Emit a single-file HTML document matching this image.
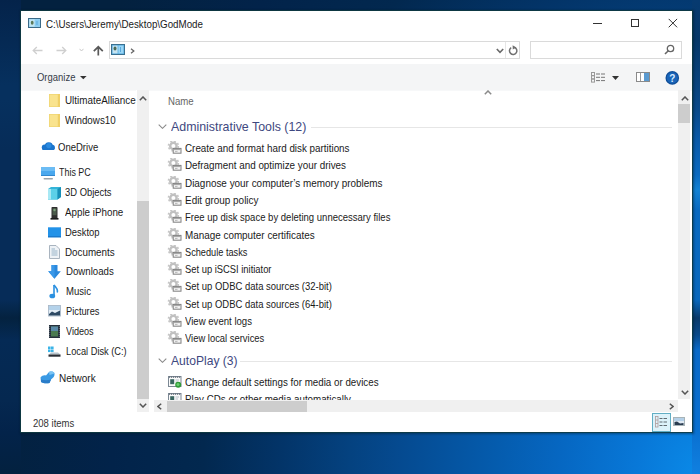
<!DOCTYPE html><html><head><meta charset="utf-8"><style>html,body{margin:0;padding:0;width:700px;height:474px;overflow:hidden;}body{position:relative;background:#0a2550;font-family:"Liberation Sans", sans-serif;}.t{position:absolute;white-space:pre;line-height:1;transform-origin:0 0;}.r{position:absolute;}</style></head><body><div class="r" style="left:0;top:0;width:700px;height:474px;background:radial-gradient(700px 840px at 700px 474px,#0a8ae8 0%,#0878d8 9%,#0667c2 20%,#055cae 29%,#054a90 43%,#044280 50%,#033468 60%,#02284f 71%,#02234a 84%,#03213f 100%);"></div><div class="r" style="left:0;top:0;width:21px;height:474px;background:linear-gradient(180deg,#04234a 0px,#06305e 85px,#06305e 100px,#062c58 150px,#062c58 300px,#04223f 318px,#052a55 340px,#052850 400px,#03234a 432px,#03213f 474px);"></div><div class="r" style="left:692px;top:0;width:8px;height:474px;background:linear-gradient(180deg,#073a70 0px,#063868 40px,#0a4a8a 110px,#0a5aa8 140px,#0a6ac0 175px,#1282d4 190px,#0a6ac0 210px,#0a68bc 300px,#0a3a6a 318px,#0a4a8a 335px,#0a6ac8 350px,#0a70d0 430px,#1080e0 474px);"></div><div class="r" style="left:21px;top:11px;width:671px;height:421px;background:#fff;box-shadow:0 0 0 1px rgba(16,60,66,0.82),0 0 2px 1.5px rgba(4,28,40,0.45);"></div><svg class="r" style="left:28px;top:18px" width="13" height="10" viewBox="0 0 13 10"><rect x="0.5" y="0.5" width="12" height="9" fill="#9ad4f0" stroke="#3a6a88"/><rect x="1.5" y="1.5" width="5" height="7" fill="#c4e6f4"/><ellipse cx="4.2" cy="4.8" rx="1.4" ry="2" fill="#5a7a5a"/><rect x="7" y="1.5" width="4.5" height="7" fill="#88ccf2"/><path d="M9 3 V7" stroke="#5aa8d8"/></svg><div class="t" style="left:45.80px;top:19.90px;font-size:10.4px;color:#1a1a1a;transform:scaleX(0.9407);">C:\Users\Jeremy\Desktop\GodMode</div><div class="r" style="left:593px;top:23px;width:9px;height:1px;background:#333;"></div><div class="r" style="left:631px;top:19px;width:6px;height:6px;border:1px solid #333;"></div><svg class="r" style="left:668px;top:18px" width="10" height="10" viewBox="0 0 10 10"><path d="M0.7 0.9 L9.1 9.3 M9.1 0.9 L0.7 9.3" stroke="#333" stroke-width="1"/></svg><svg class="r" style="left:32px;top:45px" width="11" height="10" viewBox="0 0 11 10"><path d="M1 5.5 H10.5 M4.8 2 L1.2 5.5 L4.8 9" stroke="#cfcfcf" stroke-width="1.3" fill="none"/></svg><svg class="r" style="left:56px;top:45px" width="11" height="10" viewBox="0 0 11 10"><path d="M0.5 5.5 H10 M6.2 2 L9.8 5.5 L6.2 9" stroke="#cfcfcf" stroke-width="1.3" fill="none"/></svg><svg class="r" style="left:79px;top:48px" width="5" height="4" viewBox="0 0 5 4"><path d="M0.5 0.8 L2.5 3 L4.5 0.8" stroke="#c8c8c8" stroke-width="1" fill="none"/></svg><svg class="r" style="left:93px;top:45px" width="11" height="11" viewBox="0 0 11 11"><path d="M5.3 10.5 V2 M0.8 6.2 L5.3 1.8 L9.8 6.2" stroke="#5a5a5a" stroke-width="1.7" fill="none"/></svg><div class="r" style="left:109px;top:41px;width:409px;height:16px;border:1px solid #dadada;background:#fff"></div><div class="r" style="left:505px;top:42px;width:1px;height:16px;background:#e6e6e6;"></div><svg class="r" style="left:111px;top:44px" width="14" height="11" viewBox="0 0 14 11"><rect x="0.5" y="0.5" width="13" height="10" fill="#5aaee0" stroke="#3a7090"/><rect x="1.6" y="1.6" width="5" height="7.8" fill="#c8e4f0"/><ellipse cx="4" cy="4.6" rx="1.5" ry="2" fill="#4a6a58"/><rect x="7.4" y="1.6" width="5" height="7.8" fill="#9ad6f6"/><path d="M9.5 3 V8" stroke="#5aa8dc"/></svg><svg class="r" style="left:130px;top:48px" width="5" height="6" viewBox="0 0 5 6"><path d="M1 0.8 L3.8 3 L1 5.2" stroke="#666" stroke-width="1.3" fill="none"/></svg><svg class="r" style="left:496px;top:48px" width="8" height="6" viewBox="0 0 8 6"><path d="M0.8 1 L4 4.3 L7.2 1" stroke="#6a6a6a" stroke-width="1.6" fill="none"/></svg><svg class="r" style="left:508px;top:45px" width="11" height="11" viewBox="0 0 11 11"><path d="M3.2 2.6 A3.7 3.7 0 1 0 6.3 2.2" stroke="#707070" stroke-width="1.5" fill="none"/><path d="M4.6 0.2 L8.2 2.4 L4.8 4.6 Z" fill="#707070"/></svg><div class="r" style="left:530px;top:41px;width:150px;height:16px;border:1px solid #dadada;background:#fff"></div><svg class="r" style="left:664px;top:44px" width="11" height="11" viewBox="0 0 11 11"><circle cx="6.5" cy="4.5" r="3.2" stroke="#666" stroke-width="1.3" fill="none"/><path d="M4.3 6.8 L1 10" stroke="#666" stroke-width="1.6"/></svg><div class="r" style="left:21px;top:64px;width:671px;height:26px;background:#f4f5f6;"></div><div class="r" style="left:21px;top:90px;width:671px;height:1px;background:#f7f8f9;"></div><div class="t" style="left:37.00px;top:73.00px;font-size:10.4px;color:#363c48;transform:scaleX(0.9106);">Organize</div><svg class="r" style="left:80px;top:76px" width="7" height="4" viewBox="0 0 7 4"><path d="M0 0 H6.6 L3.3 3.2 Z" fill="#333"/></svg><svg class="r" style="left:591px;top:72px" width="15" height="11" viewBox="0 0 15 11"><g fill="none" stroke="#999" stroke-width="1"><rect x="0.5" y="0.5" width="3" height="3"/><rect x="0.5" y="3.8" width="3" height="3"/><rect x="0.5" y="7.1" width="3" height="3"/></g><g stroke="#777" stroke-width="1"><path d="M5 2 H9 M10 2 H14 M5 5.3 H9 M10 5.3 H14 M5 8.6 H9 M10 8.6 H14"/></g></svg><svg class="r" style="left:612px;top:76px" width="7" height="4" viewBox="0 0 7 4"><path d="M0 0 H7 L3.5 4 Z" fill="#333"/></svg><svg class="r" style="left:636px;top:72px" width="14" height="10" viewBox="0 0 14 10"><rect x="0.5" y="0.5" width="13" height="9" fill="#fff" stroke="#8a8a8a"/><rect x="8" y="1" width="5" height="8" fill="#5a9ad0"/><path d="M4.5 1 V9" stroke="#9a9a9a"/></svg><svg class="r" style="left:665px;top:71px" width="15" height="14" viewBox="0 0 15 14"><circle cx="7.3" cy="6.9" r="6.8" fill="#0f4e98"/><circle cx="7.3" cy="6.9" r="5.6" fill="#1a64b8"/><text x="7.4" y="10.6" text-anchor="middle" font-family="Liberation Sans" font-weight="bold" font-size="10" fill="#d8ecff">?</text></svg><div class="t" style="left:65.10px;top:96.40px;font-size:10.4px;color:#1a1a1a;transform:scaleX(0.9490);">UltimateAlliance</div><div class="t" style="left:65.10px;top:115.60px;font-size:10.4px;color:#1a1a1a;transform:scaleX(0.9438);">Windows10</div><div class="t" style="left:58.40px;top:142.70px;font-size:10.4px;color:#1a1a1a;transform:scaleX(0.9159);">OneDrive</div><div class="t" style="left:59.20px;top:168.20px;font-size:10.4px;color:#1a1a1a;transform:scaleX(0.8578);">This PC</div><div class="t" style="left:65.10px;top:188.40px;font-size:10.4px;color:#1a1a1a;transform:scaleX(0.9046);">3D Objects</div><div class="t" style="left:65.10px;top:208.00px;font-size:10.4px;color:#1a1a1a;transform:scaleX(0.9429);">Apple iPhone</div><div class="t" style="left:65.30px;top:228.00px;font-size:10.4px;color:#1a1a1a;transform:scaleX(0.9049);">Desktop</div><div class="t" style="left:65.30px;top:247.50px;font-size:10.4px;color:#1a1a1a;transform:scaleX(0.9455);">Documents</div><div class="t" style="left:65.50px;top:267.40px;font-size:10.4px;color:#1a1a1a;transform:scaleX(0.9298);">Downloads</div><div class="t" style="left:65.50px;top:287.20px;font-size:10.4px;color:#1a1a1a;transform:scaleX(0.9211);">Music</div><div class="t" style="left:65.50px;top:307.30px;font-size:10.4px;color:#1a1a1a;transform:scaleX(0.8922);">Pictures</div><div class="t" style="left:65.50px;top:327.20px;font-size:10.4px;color:#1a1a1a;transform:scaleX(0.8736);">Videos</div><div class="t" style="left:65.50px;top:347.30px;font-size:10.4px;color:#1a1a1a;transform:scaleX(0.8908);">Local Disk (C:)</div><div class="t" style="left:58.80px;top:373.60px;font-size:10.4px;color:#1a1a1a;transform:scaleX(0.9630);">Network</div><svg class="r" style="left:49px;top:94px" width="11" height="13" viewBox="0 0 11 13"><rect x="0" y="0" width="11" height="13" fill="#f9e38e"/><rect x="0.4" y="0.4" width="10.2" height="12.2" fill="none" stroke="#f0d676" stroke-width="0.8"/><rect x="8.8" y="0" width="2.2" height="13" fill="#f0d068"/></svg><svg class="r" style="left:49px;top:114px" width="11" height="13" viewBox="0 0 11 13"><rect x="0" y="0" width="11" height="13" fill="#f9e38e"/><rect x="0.4" y="0.4" width="10.2" height="12.2" fill="none" stroke="#f0d676" stroke-width="0.8"/><rect x="8.8" y="0" width="2.2" height="13" fill="#f0d068"/></svg><svg class="r" style="left:41px;top:142px" width="14" height="8" viewBox="0 0 14 8"><g fill="#1a74cc"><circle cx="7.8" cy="4.2" r="4"/><circle cx="3.6" cy="5.2" r="2.8"/><circle cx="11.3" cy="5.4" r="2.6"/><rect x="1" y="5" width="12.5" height="3" rx="1.5"/></g><circle cx="7.8" cy="3.6" r="2.6" fill="#2a8ae0"/></svg><svg class="r" style="left:41px;top:167px" width="14" height="13" viewBox="0 0 14 13"><rect x="0" y="0" width="14" height="9" fill="#4aa8ee"/><rect x="0" y="0" width="14" height="4" fill="#6cbcf4"/><rect x="0" y="8.2" width="14" height="0.8" fill="#2a80c8"/><rect x="2.5" y="11" width="9.5" height="1.6" rx="0.8" fill="#9aa4ac"/></svg><svg class="r" style="left:48px;top:187px" width="13" height="13" viewBox="0 0 13 13"><path d="M0 2 L3 0 H13 V10 L9.5 12.5 H0Z" fill="#34b4d8"/><path d="M0 2 H9.5 V12.5 H0Z" fill="#5cd0e8"/><path d="M0 2 H3 V12.5 H0Z" fill="#a8e8f4"/><path d="M9.5 2 L13 0 V10 L9.5 12.5Z" fill="#1890b8"/></svg><svg class="r" style="left:50px;top:207px" width="9" height="13" viewBox="0 0 9 13"><rect x="1.5" y="0" width="6" height="12" rx="0.8" fill="#2e2e2e"/><rect x="2.5" y="1.2" width="4" height="7" fill="#4a5a4a"/><circle cx="4.5" cy="3" r="1.2" fill="#7aa07a"/><rect x="0.5" y="11" width="8" height="1.6" fill="#1a1a1a"/></svg><svg class="r" style="left:48px;top:227px" width="13" height="11" viewBox="0 0 13 11"><rect x="0" y="0.3" width="13" height="10" fill="#2292e8"/><rect x="0" y="9.3" width="13" height="1" fill="#1870c0"/></svg><svg class="r" style="left:49px;top:245px" width="11" height="14" viewBox="0 0 11 14"><path d="M0.5 0.5 H7 L10.5 4 V13.5 H0.5Z" fill="#eef2f6" stroke="#a0acb8" stroke-width="0.9"/><path d="M2.5 4 H6 M2.5 6 H8.5 M2.5 8 H8.5 M2.5 10 H8.5" stroke="#98b4c8" stroke-width="1.1"/></svg><svg class="r" style="left:48px;top:265px" width="13" height="14" viewBox="0 0 13 14"><path d="M3.5 0 H9.5 V6.3 H12.8 L6.5 13.8 L0.2 6.3 H3.5Z" fill="#2a88dc"/><path d="M3.5 0 H6.5 V13.8 L0.2 6.3 H3.5Z" fill="#3a98e8"/></svg><svg class="r" style="left:49px;top:284px" width="10" height="15" viewBox="0 0 10 15"><path d="M5 1 V11.5" stroke="#2a90e0" stroke-width="1.6"/><ellipse cx="3.3" cy="12" rx="2.9" ry="2.3" fill="#2a90e0"/><path d="M5 0.8 C6 3 9.5 4.5 8.2 8.5" stroke="#2a90e0" stroke-width="1.6" fill="none"/></svg><svg class="r" style="left:48px;top:305px" width="13" height="12" viewBox="0 0 13 12"><rect x="0.5" y="0.5" width="12" height="10.5" fill="#e4eef6" stroke="#a8b8c8" stroke-width="0.9"/><rect x="1" y="1" width="11" height="4" fill="#b4d2ea"/><path d="M1 9 L4 6.5 L7 8 L12 5.5 V10.5 H1Z" fill="#2e4a64"/></svg><svg class="r" style="left:49px;top:325px" width="11" height="13" viewBox="0 0 11 13"><rect x="0" y="0" width="11" height="13" fill="#26303c"/><rect x="2" y="1.5" width="7" height="10" fill="#4a7a50"/><rect x="2" y="1.5" width="7" height="4.5" fill="#5a8aa8"/><path d="M0.7 1 V12 M10.3 1 V12" stroke="#7a8490" stroke-width="0.8" stroke-dasharray="1 1"/></svg><svg class="r" style="left:48px;top:346px" width="13" height="11" viewBox="0 0 13 11"><g fill="#3ab4e8"><rect x="0" y="0.5" width="2.6" height="2.6"/><rect x="3" y="0.5" width="2.6" height="2.6"/><rect x="0" y="3.5" width="2.6" height="2.6"/><rect x="3" y="3.5" width="2.6" height="2.6"/></g><path d="M3 6.5 H10 L12.5 8.5 H1Z" fill="#b8c4cc"/><rect x="0.5" y="8.5" width="12" height="2.2" fill="#2a2e34"/></svg><svg class="r" style="left:40px;top:371px" width="15" height="13" viewBox="0 0 15 13"><path d="M0.5 6.5 C2 4.5 4 4 6 4.5 L9 1 C11 0 14 0.5 14.5 2.5 C15 5 13 7 11 8.5 L9.5 12 C7 12.5 3 12.5 1 11 Z" fill="#3a9ae4"/><path d="M9 1 C11 0 14 0.5 14.5 2.5 C13 3 11 3.5 9.5 4 Z" fill="#7ac4f4"/><path d="M1 11 C3 12.5 7 12.5 9.5 12 L11 8.5 C8 9.5 4 9.5 1 8.5Z" fill="#2a7cc8"/></svg><div class="r" style="left:136px;top:90px;width:1px;height:20px;background:#fff;"></div><div class="r" style="left:137px;top:90px;width:12px;height:322px;background:#f0f0f0;"></div><div class="r" style="left:137px;top:201px;width:12px;height:198px;background:#cdcdcd;"></div><svg class="r" style="left:139px;top:96px" width="8" height="5" viewBox="0 0 8 5"><path d="M0.8 4.3 L4 1 L7.2 4.3" stroke="#555" stroke-width="1.5" fill="none"/></svg><svg class="r" style="left:139px;top:403px" width="8" height="5" viewBox="0 0 8 5"><path d="M0.8 0.8 L4 4 L7.2 0.8" stroke="#555" stroke-width="1.5" fill="none"/></svg><div class="t" style="left:167.70px;top:96.70px;font-size:10.4px;color:#666;transform:scaleX(0.9272);">Name</div><svg class="r" style="left:484px;top:90px" width="8" height="5" viewBox="0 0 8 5"><path d="M0.8 4.2 L4 1 L7.2 4.2" stroke="#8a8a8a" stroke-width="1.5" fill="none"/></svg><svg class="r" style="left:158px;top:124px" width="9" height="5" viewBox="0 0 9 5"><path d="M0.7 0.7 L4.5 4.3 L8.3 0.7" stroke="#8a8a8a" stroke-width="1.1" fill="none"/></svg><div class="t" style="left:170.80px;top:121.20px;font-size:12.4px;color:#3e4880;transform:scaleX(0.9990);">Administrative Tools (12)</div><div class="r" style="left:311px;top:127px;width:361px;height:1px;background:#e6e6e6;"></div><div class="t" style="left:184.80px;top:144.00px;font-size:10.4px;color:#1a1a1a;transform:scaleX(0.9463);">Create and format hard disk partitions</div><svg class="r" style="left:167px;top:141px" width="15" height="15" viewBox="0 0 15 15"><circle cx="6.4" cy="5" r="3.2" fill="none" stroke="#c0c0c0" stroke-width="2.4"/><circle cx="6.4" cy="5" r="4.9" fill="none" stroke="#c6c6c6" stroke-width="1.7" stroke-dasharray="1.9 1.95"/><rect x="6.2" y="7.4" width="7.8" height="4.8" fill="#f4f4f4" stroke="#808080"/><path d="M6.7 8.6 H13.5" stroke="#a0a0a0" stroke-width="1"/><path d="M8 10.4 H10.5" stroke="#b0b0b0" stroke-width="0.9"/></svg><div class="t" style="left:184.80px;top:161.30px;font-size:10.4px;color:#1a1a1a;transform:scaleX(0.9482);">Defragment and optimize your drives</div><svg class="r" style="left:167px;top:158px" width="15" height="15" viewBox="0 0 15 15"><circle cx="6.4" cy="5" r="3.2" fill="none" stroke="#c0c0c0" stroke-width="2.4"/><circle cx="6.4" cy="5" r="4.9" fill="none" stroke="#c6c6c6" stroke-width="1.7" stroke-dasharray="1.9 1.95"/><rect x="6.2" y="7.4" width="7.8" height="4.8" fill="#f4f4f4" stroke="#808080"/><path d="M6.7 8.6 H13.5" stroke="#a0a0a0" stroke-width="1"/><path d="M8 10.4 H10.5" stroke="#b0b0b0" stroke-width="0.9"/></svg><div class="t" style="left:184.80px;top:178.60px;font-size:10.4px;color:#1a1a1a;transform:scaleX(0.9539);">Diagnose your computer’s memory problems</div><svg class="r" style="left:167px;top:176px" width="15" height="15" viewBox="0 0 15 15"><circle cx="6.4" cy="5" r="3.2" fill="none" stroke="#c0c0c0" stroke-width="2.4"/><circle cx="6.4" cy="5" r="4.9" fill="none" stroke="#c6c6c6" stroke-width="1.7" stroke-dasharray="1.9 1.95"/><rect x="6.2" y="7.4" width="7.8" height="4.8" fill="#f4f4f4" stroke="#808080"/><path d="M6.7 8.6 H13.5" stroke="#a0a0a0" stroke-width="1"/><path d="M8 10.4 H10.5" stroke="#b0b0b0" stroke-width="0.9"/></svg><div class="t" style="left:184.80px;top:195.90px;font-size:10.4px;color:#1a1a1a;transform:scaleX(0.9567);">Edit group policy</div><svg class="r" style="left:167px;top:193px" width="15" height="15" viewBox="0 0 15 15"><circle cx="6.4" cy="5" r="3.2" fill="none" stroke="#c0c0c0" stroke-width="2.4"/><circle cx="6.4" cy="5" r="4.9" fill="none" stroke="#c6c6c6" stroke-width="1.7" stroke-dasharray="1.9 1.95"/><rect x="6.2" y="7.4" width="7.8" height="4.8" fill="#f4f4f4" stroke="#808080"/><path d="M6.7 8.6 H13.5" stroke="#a0a0a0" stroke-width="1"/><path d="M8 10.4 H10.5" stroke="#b0b0b0" stroke-width="0.9"/></svg><div class="t" style="left:184.80px;top:213.20px;font-size:10.4px;color:#1a1a1a;transform:scaleX(0.9165);">Free up disk space by deleting unnecessary files</div><svg class="r" style="left:167px;top:210px" width="15" height="15" viewBox="0 0 15 15"><circle cx="6.4" cy="5" r="3.2" fill="none" stroke="#c0c0c0" stroke-width="2.4"/><circle cx="6.4" cy="5" r="4.9" fill="none" stroke="#c6c6c6" stroke-width="1.7" stroke-dasharray="1.9 1.95"/><rect x="6.2" y="7.4" width="7.8" height="4.8" fill="#f4f4f4" stroke="#808080"/><path d="M6.7 8.6 H13.5" stroke="#a0a0a0" stroke-width="1"/><path d="M8 10.4 H10.5" stroke="#b0b0b0" stroke-width="0.9"/></svg><div class="t" style="left:184.80px;top:230.50px;font-size:10.4px;color:#1a1a1a;transform:scaleX(0.9509);">Manage computer certificates</div><svg class="r" style="left:167px;top:228px" width="15" height="15" viewBox="0 0 15 15"><circle cx="6.4" cy="5" r="3.2" fill="none" stroke="#c0c0c0" stroke-width="2.4"/><circle cx="6.4" cy="5" r="4.9" fill="none" stroke="#c6c6c6" stroke-width="1.7" stroke-dasharray="1.9 1.95"/><rect x="6.2" y="7.4" width="7.8" height="4.8" fill="#f4f4f4" stroke="#808080"/><path d="M6.7 8.6 H13.5" stroke="#a0a0a0" stroke-width="1"/><path d="M8 10.4 H10.5" stroke="#b0b0b0" stroke-width="0.9"/></svg><div class="t" style="left:184.80px;top:247.80px;font-size:10.4px;color:#1a1a1a;transform:scaleX(0.8855);">Schedule tasks</div><svg class="r" style="left:167px;top:245px" width="15" height="15" viewBox="0 0 15 15"><circle cx="6.4" cy="5" r="3.2" fill="none" stroke="#c0c0c0" stroke-width="2.4"/><circle cx="6.4" cy="5" r="4.9" fill="none" stroke="#c6c6c6" stroke-width="1.7" stroke-dasharray="1.9 1.95"/><rect x="6.2" y="7.4" width="7.8" height="4.8" fill="#f4f4f4" stroke="#808080"/><path d="M6.7 8.6 H13.5" stroke="#a0a0a0" stroke-width="1"/><path d="M8 10.4 H10.5" stroke="#b0b0b0" stroke-width="0.9"/></svg><div class="t" style="left:184.80px;top:265.10px;font-size:10.4px;color:#1a1a1a;transform:scaleX(0.9022);">Set up iSCSI initiator</div><svg class="r" style="left:167px;top:262px" width="15" height="15" viewBox="0 0 15 15"><circle cx="6.4" cy="5" r="3.2" fill="none" stroke="#c0c0c0" stroke-width="2.4"/><circle cx="6.4" cy="5" r="4.9" fill="none" stroke="#c6c6c6" stroke-width="1.7" stroke-dasharray="1.9 1.95"/><rect x="6.2" y="7.4" width="7.8" height="4.8" fill="#f4f4f4" stroke="#808080"/><path d="M6.7 8.6 H13.5" stroke="#a0a0a0" stroke-width="1"/><path d="M8 10.4 H10.5" stroke="#b0b0b0" stroke-width="0.9"/></svg><div class="t" style="left:184.80px;top:282.40px;font-size:10.4px;color:#1a1a1a;transform:scaleX(0.9110);">Set up ODBC data sources (32-bit)</div><svg class="r" style="left:167px;top:279px" width="15" height="15" viewBox="0 0 15 15"><circle cx="6.4" cy="5" r="3.2" fill="none" stroke="#c0c0c0" stroke-width="2.4"/><circle cx="6.4" cy="5" r="4.9" fill="none" stroke="#c6c6c6" stroke-width="1.7" stroke-dasharray="1.9 1.95"/><rect x="6.2" y="7.4" width="7.8" height="4.8" fill="#f4f4f4" stroke="#808080"/><path d="M6.7 8.6 H13.5" stroke="#a0a0a0" stroke-width="1"/><path d="M8 10.4 H10.5" stroke="#b0b0b0" stroke-width="0.9"/></svg><div class="t" style="left:184.80px;top:299.70px;font-size:10.4px;color:#1a1a1a;transform:scaleX(0.9110);">Set up ODBC data sources (64-bit)</div><svg class="r" style="left:167px;top:297px" width="15" height="15" viewBox="0 0 15 15"><circle cx="6.4" cy="5" r="3.2" fill="none" stroke="#c0c0c0" stroke-width="2.4"/><circle cx="6.4" cy="5" r="4.9" fill="none" stroke="#c6c6c6" stroke-width="1.7" stroke-dasharray="1.9 1.95"/><rect x="6.2" y="7.4" width="7.8" height="4.8" fill="#f4f4f4" stroke="#808080"/><path d="M6.7 8.6 H13.5" stroke="#a0a0a0" stroke-width="1"/><path d="M8 10.4 H10.5" stroke="#b0b0b0" stroke-width="0.9"/></svg><div class="t" style="left:184.80px;top:317.00px;font-size:10.4px;color:#1a1a1a;transform:scaleX(0.9229);">View event logs</div><svg class="r" style="left:167px;top:314px" width="15" height="15" viewBox="0 0 15 15"><circle cx="6.4" cy="5" r="3.2" fill="none" stroke="#c0c0c0" stroke-width="2.4"/><circle cx="6.4" cy="5" r="4.9" fill="none" stroke="#c6c6c6" stroke-width="1.7" stroke-dasharray="1.9 1.95"/><rect x="6.2" y="7.4" width="7.8" height="4.8" fill="#f4f4f4" stroke="#808080"/><path d="M6.7 8.6 H13.5" stroke="#a0a0a0" stroke-width="1"/><path d="M8 10.4 H10.5" stroke="#b0b0b0" stroke-width="0.9"/></svg><div class="t" style="left:184.80px;top:334.30px;font-size:10.4px;color:#1a1a1a;transform:scaleX(0.9053);">View local services</div><svg class="r" style="left:167px;top:331px" width="15" height="15" viewBox="0 0 15 15"><circle cx="6.4" cy="5" r="3.2" fill="none" stroke="#c0c0c0" stroke-width="2.4"/><circle cx="6.4" cy="5" r="4.9" fill="none" stroke="#c6c6c6" stroke-width="1.7" stroke-dasharray="1.9 1.95"/><rect x="6.2" y="7.4" width="7.8" height="4.8" fill="#f4f4f4" stroke="#808080"/><path d="M6.7 8.6 H13.5" stroke="#a0a0a0" stroke-width="1"/><path d="M8 10.4 H10.5" stroke="#b0b0b0" stroke-width="0.9"/></svg><svg class="r" style="left:158px;top:358px" width="9" height="5" viewBox="0 0 9 5"><path d="M0.7 0.7 L4.5 4.3 L8.3 0.7" stroke="#8a8a8a" stroke-width="1.1" fill="none"/></svg><div class="t" style="left:170.80px;top:355.30px;font-size:12.4px;color:#3e4880;transform:scaleX(0.9767);">AutoPlay (3)</div><div class="r" style="left:240px;top:361px;width:432px;height:1px;background:#e6e6e6;"></div><div class="t" style="left:184.80px;top:377.80px;font-size:10.4px;color:#1a1a1a;transform:scaleX(0.9415);">Change default settings for media or devices</div><svg class="r" style="left:168px;top:376px" width="15" height="13" viewBox="0 0 15 13"><rect x="0.5" y="0.5" width="12.5" height="10" fill="#fafafa" stroke="#7c8894"/><path d="M1 1.2 H12.5" stroke="#5a6470" stroke-width="1.2" stroke-dasharray="1.2 0.8"/><rect x="2.2" y="3.2" width="4" height="5" fill="#3a6660"/><path d="M7.5 4 H11 M7.5 6 H10" stroke="#b8c0c8"/><circle cx="10.2" cy="8.8" r="3" fill="#2e9a36"/><circle cx="10" cy="8.6" r="1.5" fill="#6ad070"/></svg><div class="r" style="left:154px;top:392px;width:524px;height:8px;overflow:hidden;"><div style="position:absolute;left:0;top:0;width:600px;height:20px;"><div class="t" style="left:30.80px;top:3.40px;font-size:10.4px;color:#1a1a1a;transform:scaleX(0.9393);">Play CDs or other media automatically</div></div></div><svg class="r" style="left:168px;top:393px" width="15" height="7" viewBox="0 0 15 7"><rect x="0.5" y="0.5" width="12.5" height="10" fill="#fafafa" stroke="#7c8894"/><path d="M1 1.2 H12.5" stroke="#5a6470" stroke-width="1.2" stroke-dasharray="1.2 0.8"/><rect x="2.2" y="3.2" width="4" height="5" fill="#3a6660"/><path d="M7.5 4 H11 M7.5 6 H10" stroke="#b8c0c8"/></svg><div class="r" style="left:678px;top:90px;width:12px;height:309px;background:#f0f0f0;"></div><div class="r" style="left:678px;top:104px;width:12px;height:19px;background:#cdcdcd;"></div><svg class="r" style="left:681px;top:96px" width="8" height="5" viewBox="0 0 8 5"><path d="M0.8 4.3 L4 1 L7.2 4.3" stroke="#555" stroke-width="1.5" fill="none"/></svg><svg class="r" style="left:681px;top:390px" width="8" height="5" viewBox="0 0 8 5"><path d="M0.8 0.8 L4 4 L7.2 0.8" stroke="#555" stroke-width="1.5" fill="none"/></svg><div class="r" style="left:154px;top:400px;width:524px;height:12px;background:#f0f0f0;"></div><div class="r" style="left:167px;top:401px;width:140px;height:11px;background:#cdcdcd;"></div><svg class="r" style="left:157px;top:403px" width="5" height="7" viewBox="0 0 5 7"><path d="M4.2 0.8 L1 3.5 L4.2 6.2" stroke="#555" stroke-width="1.5" fill="none"/></svg><svg class="r" style="left:669px;top:403px" width="5" height="7" viewBox="0 0 5 7"><path d="M0.8 0.8 L4 3.5 L0.8 6.2" stroke="#555" stroke-width="1.5" fill="none"/></svg><div class="t" style="left:32.80px;top:418.60px;font-size:10.4px;color:#333;transform:scaleX(0.9165);">208 items</div><div class="r" style="left:652px;top:413px;width:17px;height:17px;border:1px solid #62aec4;background:#dcf2fa"></div><svg class="r" style="left:655px;top:416px" width="13" height="12" viewBox="0 0 13 12"><g fill="none" stroke="#b09a9a" stroke-width="0.8"><rect x="0.5" y="0.5" width="2.5" height="10.5"/><path d="M0.5 4 H3 M0.5 7.5 H3"/></g><g stroke="#606a70" stroke-width="1"><path d="M4.5 2.5 H7.5 M8.5 2.5 H12 M4.5 6 H7.5 M8.5 6 H12 M4.5 9.5 H7.5 M8.5 9.5 H12"/></g></svg><svg class="r" style="left:673px;top:417px" width="12" height="9" viewBox="0 0 12 9"><rect x="0.5" y="0.5" width="11" height="8" fill="#dfe9f2" stroke="#a8b4b8"/><rect x="1" y="1" width="10" height="3" fill="#b4d0e8"/><path d="M1.5 5 L4 4.5 L7 6.5 L10.5 6 V8 H1.5Z" fill="#2a3c50"/></svg></body></html>
